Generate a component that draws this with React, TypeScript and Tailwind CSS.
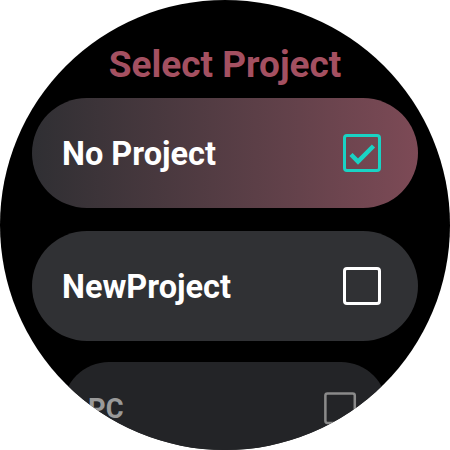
import React from "react";

type Project = { name: string; checked: boolean };

const projects: Project[] = [
  { name: "No Project", checked: true },
  { name: "NewProject", checked: false },
  { name: "PC", checked: false },
];

function CheckBox({ checked, dim }: { checked: boolean; dim?: boolean }) {
  if (checked) {
    return (
      <div className="w-[38px] h-[38px] rounded-[4px] border-[3px] border-[#19d3c4] flex items-center justify-center">
        <svg width="32" height="32" viewBox="0 0 32 32" fill="none">
          <path
            d="M5 17.5 L12 24.5 L27.5 9"
            stroke="#19d3c4"
            strokeWidth="4.5"
            strokeLinecap="butt"
            strokeLinejoin="miter"
          />
        </svg>
      </div>
    );
  }
  return (
    <div
      className={
        dim
          ? "w-[38px] h-[38px] rounded-[4px] border-[3px] border-[#a3a3a3]"
          : "w-[38px] h-[38px] rounded-[4px] border-[3px] border-white"
      }
    />
  );
}

function Chip({ project, index }: { project: Project; index: number }) {
  const base =
    "w-[386px] h-[110px] rounded-full flex items-center justify-between pl-[30px] pr-[37px] shrink-0";
  if (index === 0) {
    return (
      <div className={`${base} bg-gradient-to-r from-[#2f2f33] to-[#7d4a56]`}>
        <span className="text-[32.5px] leading-[32px] font-bold text-white pt-[2px]">{project.name}</span>
        <CheckBox checked={project.checked} />
      </div>
    );
  }
  if (index === 1) {
    return (
      <div className={`${base} bg-[#303134] mt-[23px]`}>
        <span className="text-[32.5px] leading-[32px] font-bold text-white pt-[2px]">{project.name}</span>
        <CheckBox checked={project.checked} />
      </div>
    );
  }
  return (
    <div className={`${base} bg-[#2a2b2e] mt-[21px] origin-top scale-[0.84] opacity-[0.85]`}>
      <span className="text-[32.5px] leading-[32px] font-bold text-[#b5b5b5] pt-[2px]">{project.name}</span>
      <CheckBox checked={project.checked} dim />
    </div>
  );
}

export default function App() {
  return (
    <div
      className="w-[450px] h-[450px] bg-white"
      style={{ fontFamily: "Roboto, 'Noto Sans', sans-serif" }}
    >
      <div className="w-[450px] h-[450px] rounded-full bg-black overflow-hidden flex flex-col items-center pt-[46px]">
        <h1 className="text-[37px] leading-[37px] font-bold text-[#a45061] shrink-0">Select Project</h1>
        <div className="mt-[15px] flex flex-col items-center">
          {projects.map((p, i) => (
            <Chip key={p.name} project={p} index={i} />
          ))}
        </div>
      </div>
    </div>
  );
}
